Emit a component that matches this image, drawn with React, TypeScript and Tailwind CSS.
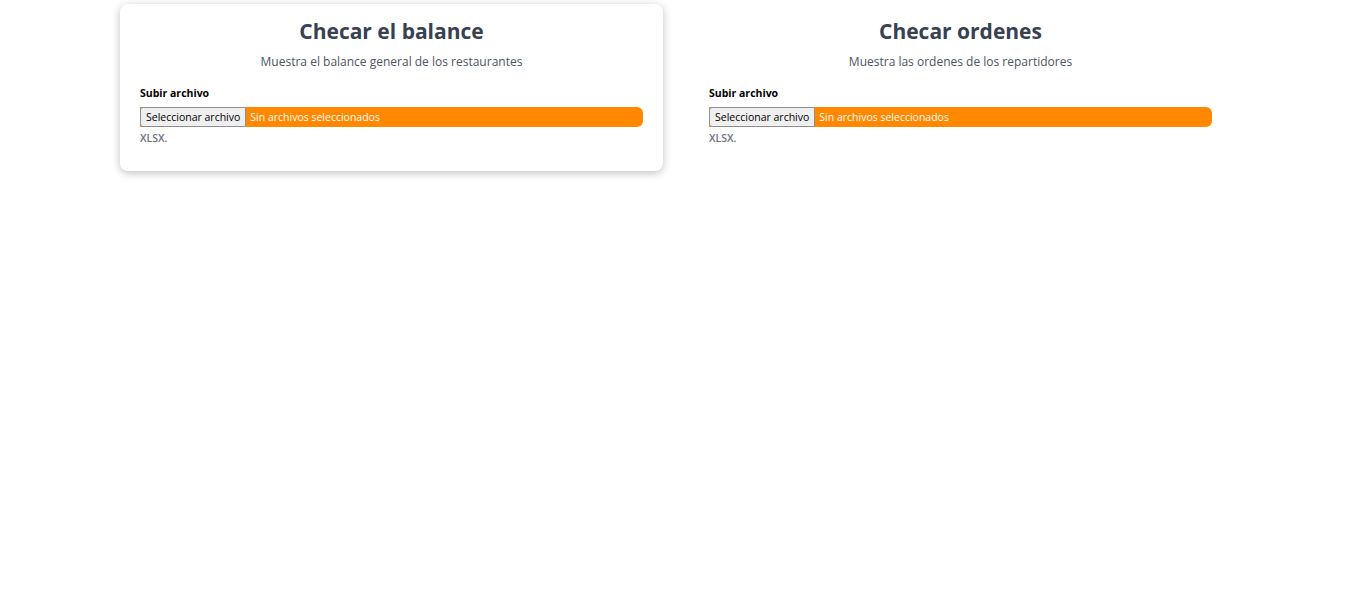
import React from "react";

interface UploadCardProps {
  title: string;
  description: string;
  active?: boolean;
}

function UploadCard({ title, description, active }: UploadCardProps) {
  return (
    <div
      className={
        "rounded-lg px-5 pt-[14px] pb-[26px] bg-white " +
        (active ? "shadow-[0_2px_8px_rgba(0,0,0,0.25)]" : "")
      }
    >
      <h2 className="text-center text-[21px] leading-[26px] font-bold text-[#374151]">
        {title}
      </h2>
      <p className="mt-[10px] text-center text-[12px] leading-[16px] text-[#4b5563]">
        {description}
      </p>
      <div className="mt-[16px]">
        <label className="block text-[10.5px] leading-[14px] font-bold text-black">
          Subir archivo
        </label>
        <div className="mt-[7px] flex h-[20px] items-stretch rounded-r-md bg-[#ff8800]">
          <button className="rounded-l-[3px] border border-[#8f8f8f] bg-[#efefef] px-[5px] text-[10.5px] leading-[18px] text-black">
            Seleccionar archivo
          </button>
          <span className="pl-[4px] text-[10.5px] leading-[20px] text-white">
            Sin archivos seleccionados
          </span>
        </div>
        <p className="mt-[4px] text-[10.5px] leading-[14px] font-semibold text-[#6b7280]">
          XLSX.
        </p>
      </div>
    </div>
  );
}

export default function App() {
  return (
    <div
      className="min-h-screen bg-white"
      style={{ fontFamily: '"Open Sans", "Noto Sans", sans-serif' }}
    >
      <div className="ml-[120px] grid w-[1112px] grid-cols-2 gap-[26px] pt-[4px]">
        <UploadCard
          title="Checar el balance"
          description="Muestra el balance general de los restaurantes"
          active
        />
        <UploadCard
          title="Checar ordenes"
          description="Muestra las ordenes de los repartidores"
        />
      </div>
    </div>
  );
}
